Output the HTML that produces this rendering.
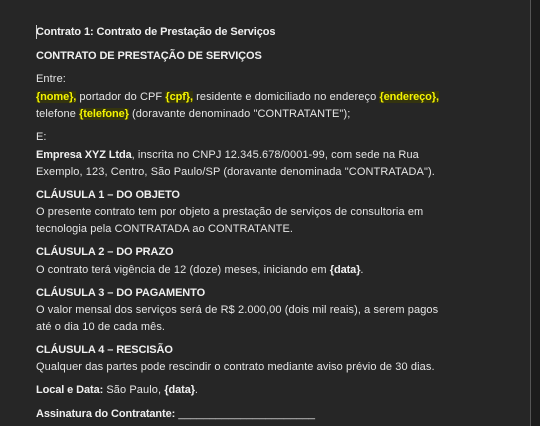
<!DOCTYPE html>
<html><head><meta charset="utf-8"><style>
html,body{margin:0;padding:0;width:540px;height:426px;overflow:hidden;background:#262626;}
body{font-family:"Liberation Sans",sans-serif;font-size:11px;color:#e6e6e6;position:relative;}
.l{position:absolute;left:36px;height:17px;line-height:17px;white-space:nowrap;letter-spacing:0.1px;}
b{font-weight:bold;color:#f0f0f0;letter-spacing:-0.1px;}
.y{color:#f5f500;font-weight:bold;background:#34340e;letter-spacing:-0.1px;}
.side{position:absolute;left:530px;top:0;width:10px;height:426px;background:#1c1c1c;border-left:1px solid #555;}
.cur{position:absolute;left:36px;top:25px;width:1px;height:14px;background:#ccc;}
</style></head><body>
<div class="side"></div>
<div class="cur"></div>
<div class="l" style="top:24px"><b>Contrato 1: Contrato de Prestação de Serviços</b></div>
<div class="l" style="top:48px"><b>CONTRATO DE PRESTAÇÃO DE SERVIÇOS</b></div>
<div class="l" style="top:71px">Entre:</div>
<div class="l" style="top:89px"><span class="y">{nome},</span> portador do CPF <span class="y">{cpf},</span> residente e domiciliado no endereço <span class="y">{endereço},</span></div>
<div class="l" style="top:106px">telefone <span class="y">{telefone}</span> (doravante denominado "CONTRATANTE");</div>
<div class="l" style="top:129px">E:</div>
<div class="l" style="top:147px"><b>Empresa XYZ Ltda</b>, inscrita no CNPJ 12.345.678/0001-99, com sede na Rua</div>
<div class="l" style="top:164px">Exemplo, 123, Centro, São Paulo/SP (doravante denominada "CONTRATADA").</div>
<div class="l" style="top:187px"><b>CLÁUSULA 1 – DO OBJETO</b></div>
<div class="l" style="top:204px">O presente contrato tem por objeto a prestação de serviços de consultoria em</div>
<div class="l" style="top:221px">tecnologia pela CONTRATADA ao CONTRATANTE.</div>
<div class="l" style="top:244px"><b>CLÁUSULA 2 – DO PRAZO</b></div>
<div class="l" style="top:262px">O contrato terá vigência de 12 (doze) meses, iniciando em <b>{data}</b>.</div>
<div class="l" style="top:285px"><b>CLÁUSULA 3 – DO PAGAMENTO</b></div>
<div class="l" style="top:302px">O valor mensal dos serviços será de R$ 2.000,00 (dois mil reais), a serem pagos</div>
<div class="l" style="top:319px">até o dia 10 de cada mês.</div>
<div class="l" style="top:342px"><b>CLÁUSULA 4 – RESCISÃO</b></div>
<div class="l" style="top:359px">Qualquer das partes pode rescindir o contrato mediante aviso prévio de 30 dias.</div>
<div class="l" style="top:382px"><b>Local e Data:</b> São Paulo, <b>{data}</b>.</div>
<div class="l" style="top:406px"><b>Assinatura do Contratante:</b> ______________________</div>
</body></html>
